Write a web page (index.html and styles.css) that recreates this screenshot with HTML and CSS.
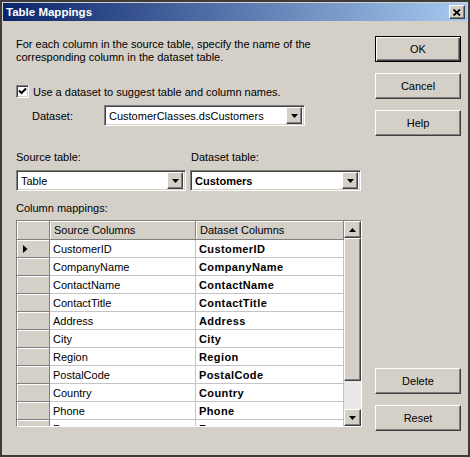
FILE: index.html
```html
<!DOCTYPE html>
<html>
<head>
<meta charset="utf-8">
<link rel="stylesheet" href="styles.css">
</head>
<body>
<div class="window">
  <div class="titlebar">
    <span class="title">Table Mappings</span>
    <span class="close raised">
      <svg width="8" height="7" viewBox="0 0 8 7"><path d="M0.5 0.5 L7 6.5 M7 0.5 L0.5 6.5" stroke="#000" stroke-width="1.8" fill="none"/></svg>
    </span>
  </div>
  <div class="body">
    <div class="main">
      <p class="intro">For each column in the source table, specify the name of the<br>corresponding column in the dataset table.</p>
      <div class="check-row">
        <span class="checkbox sunken"><svg width="9" height="9" viewBox="0 0 9 9"><path d="M1 3.5 L3.5 6 L8 1.5" stroke="#000" stroke-width="2" fill="none"/></svg></span>
        <span>Use a dataset to suggest table and column names.</span>
      </div>
      <div class="dataset-row">
        <span class="dataset-label">Dataset:</span>
        <div class="combo sunken combo-dataset">
          <span class="combo-text">CustomerClasses.dsCustomers</span>
          <span class="drop raised"><svg width="7" height="4" viewBox="0 0 7 4"><path d="M0 0 H7 L3.5 4 Z" fill="#000"/></svg></span>
        </div>
      </div>
      <div class="tables-row">
        <div class="field field-source">
          <div class="field-label">Source table:</div>
          <div class="combo sunken">
            <span class="combo-text">Table</span>
            <span class="drop raised"><svg width="7" height="4" viewBox="0 0 7 4"><path d="M0 0 H7 L3.5 4 Z" fill="#000"/></svg></span>
          </div>
        </div>
        <div class="field field-target">
          <div class="field-label">Dataset table:</div>
          <div class="combo sunken">
            <span class="combo-text bold">Customers</span>
            <span class="drop raised"><svg width="7" height="4" viewBox="0 0 7 4"><path d="M0 0 H7 L3.5 4 Z" fill="#000"/></svg></span>
          </div>
        </div>
      </div>
      <div class="mappings-label">Column mappings:</div>
      <div class="grid">
        <div class="grid-table">
          <div class="hcell corner"></div>
          <div class="hcell">Source Columns</div>
          <div class="hcell">Dataset Columns</div>

          <div class="rhead"><svg width="5" height="8" viewBox="0 0 5 8"><path d="M0 0 L4.5 4 L0 8 Z" fill="#000"/></svg></div>
          <div class="cell">CustomerID</div><div class="cell bold">CustomerID</div>
          <div class="rhead"></div><div class="cell">CompanyName</div><div class="cell bold">CompanyName</div>
          <div class="rhead"></div><div class="cell">ContactName</div><div class="cell bold">ContactName</div>
          <div class="rhead"></div><div class="cell">ContactTitle</div><div class="cell bold">ContactTitle</div>
          <div class="rhead"></div><div class="cell">Address</div><div class="cell bold">Address</div>
          <div class="rhead"></div><div class="cell">City</div><div class="cell bold">City</div>
          <div class="rhead"></div><div class="cell">Region</div><div class="cell bold">Region</div>
          <div class="rhead"></div><div class="cell">PostalCode</div><div class="cell bold">PostalCode</div>
          <div class="rhead"></div><div class="cell">Country</div><div class="cell bold">Country</div>
          <div class="rhead"></div><div class="cell">Phone</div><div class="cell bold">Phone</div>
          <div class="rhead"></div><div class="cell">Fax</div><div class="cell bold">Fax</div>
        </div>
        <div class="vscroll">
          <span class="sbtn raised"><svg width="7" height="4" viewBox="0 0 7 4"><path d="M0 4 H7 L3.5 0 Z" fill="#000"/></svg></span>
          <span class="thumb raised"></span>
          <span class="track"></span>
          <span class="sbtn raised"><svg width="7" height="4" viewBox="0 0 7 4"><path d="M0 0 H7 L3.5 4 Z" fill="#000"/></svg></span>
        </div>
      </div>
    </div>
    <div class="side">
      <button class="btn btn-default">OK</button>
      <button class="btn">Cancel</button>
      <button class="btn">Help</button>
      <button class="btn btn-delete">Delete</button>
      <button class="btn">Reset</button>
    </div>
  </div>
</div>
</body>
</html>
```

FILE: styles.css
```css
* { box-sizing: border-box; }
html, body { margin: 0; padding: 0; background: #d4d0c8; }
body { font-family: "Liberation Sans", Arial, sans-serif; font-size: 11px; color: #000; }

.window {
  width: 470px;
  height: 457px;
  border: 2px solid #3c3c3c;
  padding: 1px;
  background: #d4d0c8;
  display: flex;
  flex-direction: column;
}

.titlebar {
  height: 18px;
  background: linear-gradient(to right, #0a246a, #a6caf0);
  display: flex;
  align-items: center;
  justify-content: space-between;
  padding: 0 2px 0 3px;
}
.title { color: #fff; font-weight: bold; font-size: 11.5px; }

.raised {
  background: #d4d0c8;
  border: 1px solid;
  border-color: #fff #404040 #404040 #fff;
  box-shadow: inset -1px -1px #808080;
}
.sunken {
  border: 1px solid;
  border-color: #808080 #fff #fff #808080;
  box-shadow: inset 1px 1px #404040, inset -1px -1px #d4d0c8;
  background: #fff;
}

.close {
  width: 16px;
  height: 14px;
  display: flex;
  align-items: center;
  justify-content: center;
  padding-right: 1px;
}

.body { flex: 1; display: flex; }
.main { width: 346px; margin-left: 13px; }

.intro { margin: 17px 0 0; line-height: 13px; }

.check-row {
  margin-top: 21px;
  height: 13px;
  display: flex;
  align-items: center;
  gap: 4px;
}
.checkbox {
  width: 13px;
  height: 13px;
  display: flex;
  align-items: center;
  justify-content: center;
}

.dataset-row { margin-top: 7px; display: flex; align-items: center; }
.dataset-label { width: 72px; margin-left: 16px; }
.combo-dataset { width: 201px; }

.combo {
  height: 21px;
  display: flex;
  align-items: center;
  justify-content: space-between;
  padding: 2px;
}
.combo-text { padding-left: 2px; }
.bold { font-weight: bold; }
.cell.bold { letter-spacing: 0.4px; }
.drop {
  width: 16px;
  height: 17px;
  display: flex;
  align-items: center;
  justify-content: center;
}

.tables-row { margin-top: 25px; display: flex; gap: 4px; }
.field-source { width: 170px; }
.field-target { width: 171px; }
.field-label { height: 13px; line-height: 13px; margin-bottom: 6px; }
.field-target .field-label { padding-left: 1px; }

.mappings-label { margin-top: 11px; height: 13px; line-height: 13px; margin-bottom: 5px; }

.grid {
  height: 207px;
  border: 1px solid;
  border-color: #808080 #fff #fff #808080;
  display: flex;
  background: #d4d0c8;
}
.grid-table {
  flex: 1;
  overflow: hidden;
  display: grid;
  grid-template-columns: 33px 146px 148px;
  grid-auto-rows: 18px;
  grid-template-rows: 19px;
  align-content: start;
}
.hcell {
  background: #d4d0c8;
  border-right: 1px solid #808080;
  border-bottom: 1px solid #808080;
  box-shadow: inset 1px 1px #fff;
  padding-left: 4px;
  display: flex;
  align-items: center;
}
.rhead {
  background: #d4d0c8;
  border-right: 1px solid #808080;
  border-bottom: 1px solid #808080;
  box-shadow: inset 1px 1px #fff;
  display: flex;
  align-items: center;
  padding-left: 6px;
}
.cell {
  background: #fff;
  border-right: 1px solid #c4c4c4;
  border-bottom: 1px solid #c4c4c4;
  padding-left: 3px;
  display: flex;
  align-items: center;
}

.vscroll { width: 17px; display: flex; flex-direction: column; }
.sbtn {
  height: 17px;
  display: flex;
  align-items: center;
  justify-content: center;
}
.thumb { height: 143px; }
.track { flex: 1; background: #ebe9e5; }

.side { margin-left: 13px; width: 86px; padding-top: 15px; display: flex; flex-direction: column; gap: 11px; }
.btn {
  width: 86px;
  height: 26px;
  font-family: inherit;
  font-size: 11px;
  color: #000;
  background: #d4d0c8;
  border: 1px solid;
  border-color: #fff #404040 #404040 #fff;
  box-shadow: inset -1px -1px #808080;
  padding: 0;
}
.btn-default {
  border: 1px solid #000;
  box-shadow: inset 1px 1px #fff, inset -1px -1px #404040, inset -2px -2px #808080;
}
.btn-delete { margin-top: 221px; }
```
